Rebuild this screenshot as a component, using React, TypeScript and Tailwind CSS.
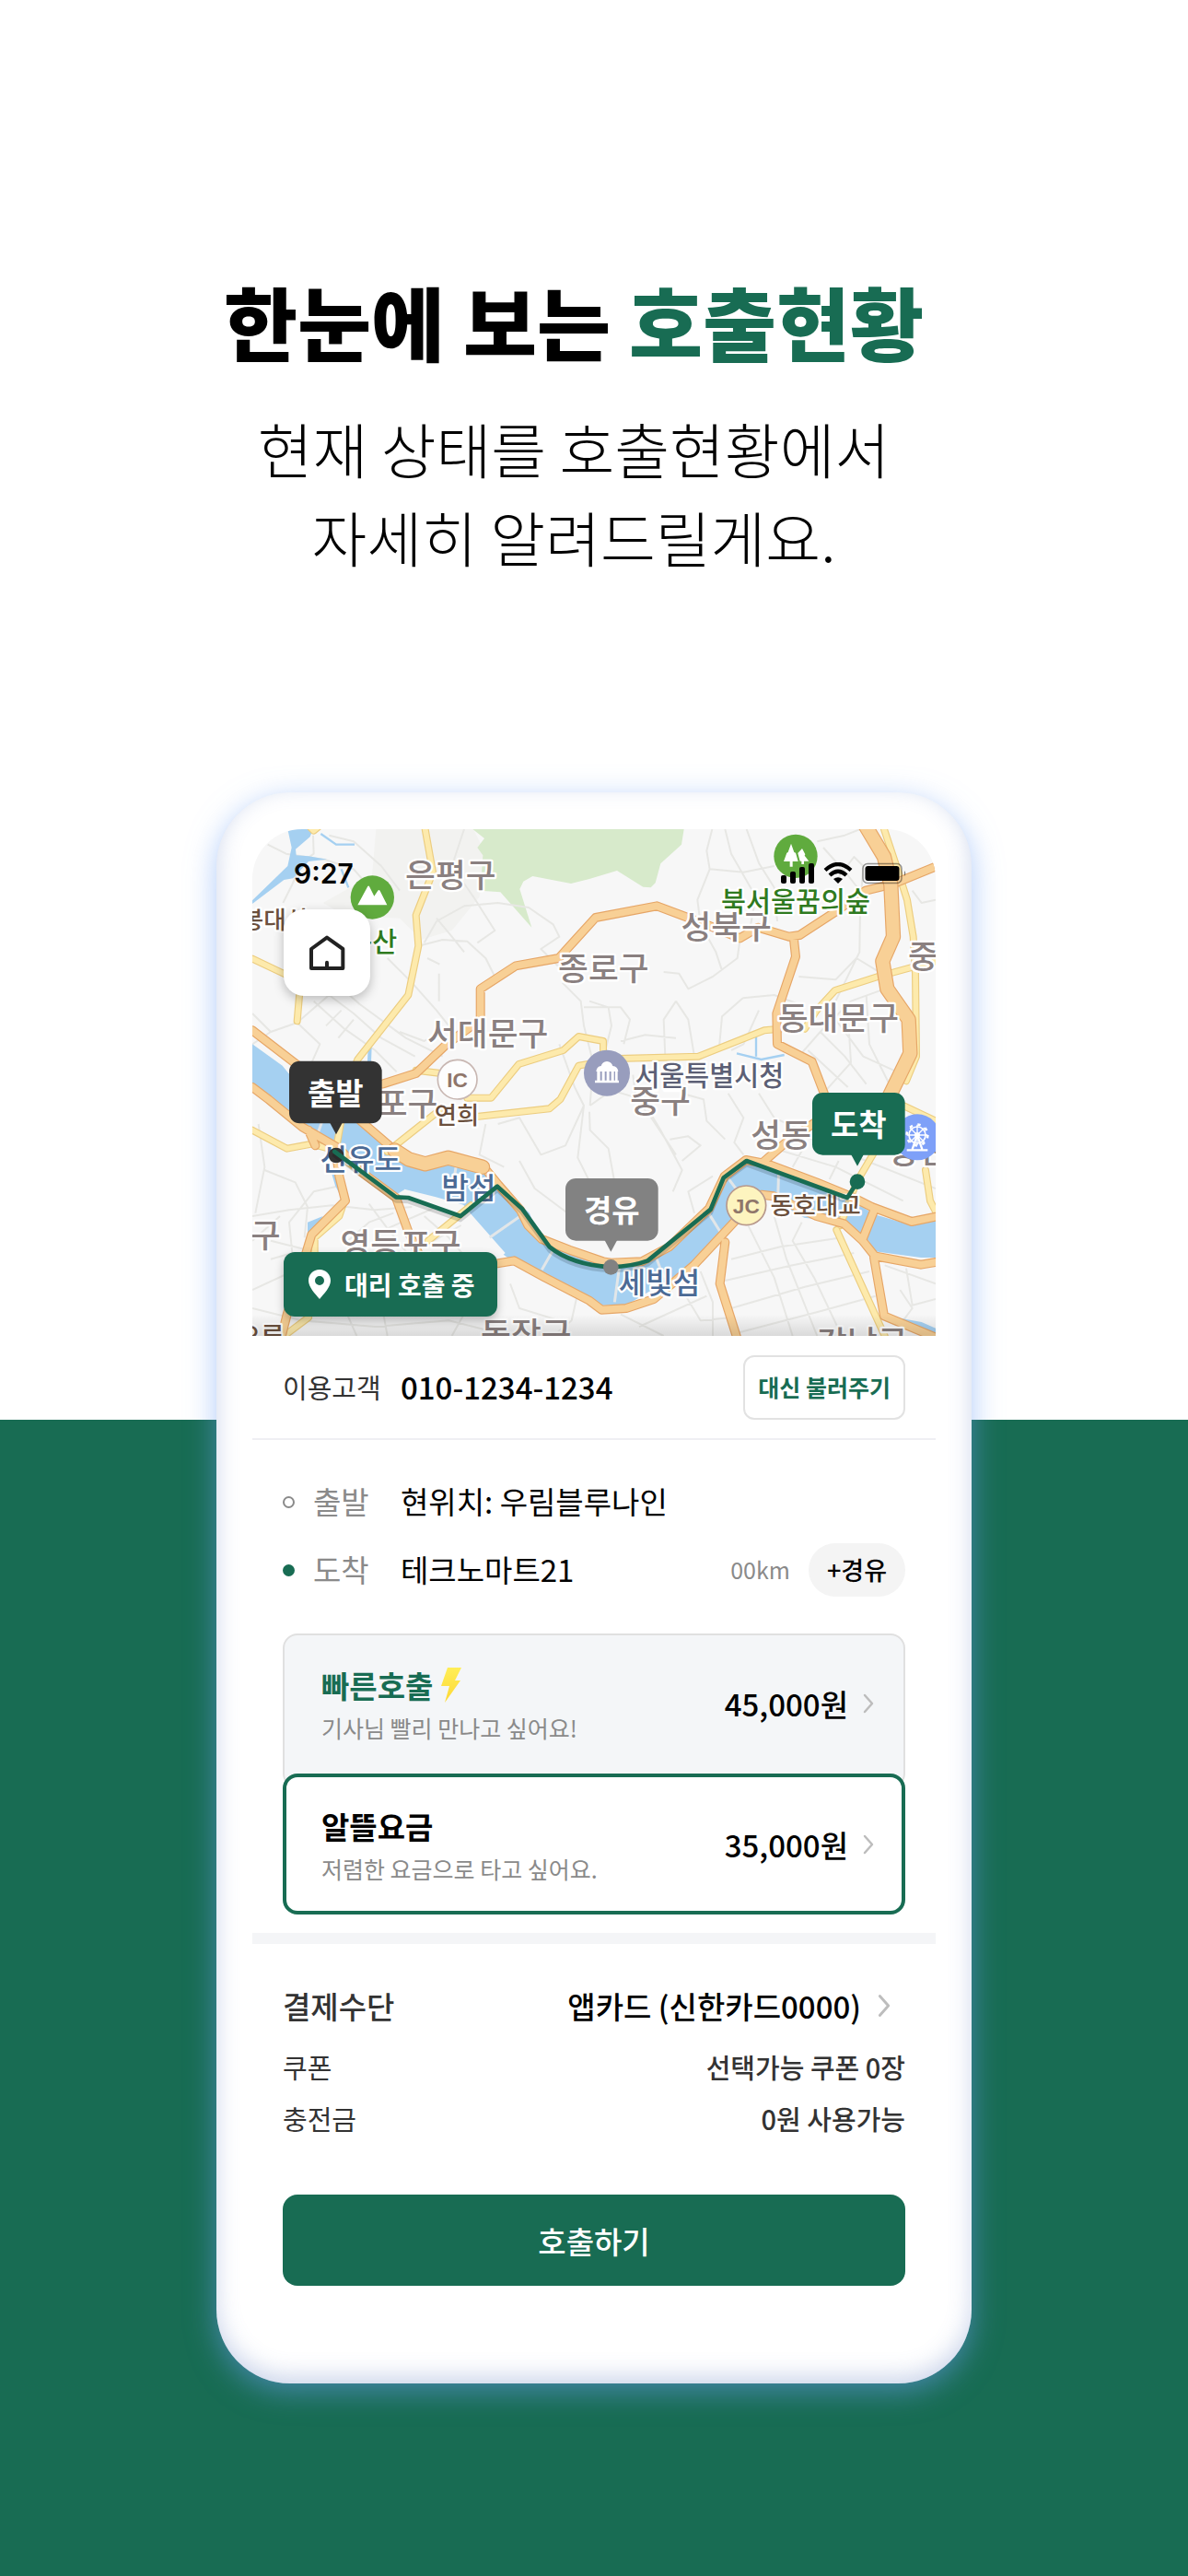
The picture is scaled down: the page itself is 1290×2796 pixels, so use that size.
import React from "react";

type Label = {
  text: string;
  x: number;
  y: number;
  size?: number;
  anchor?: "start" | "middle" | "end";
  fill?: string;
};

const GRAY = "#8a8080";
const BROWN = "#6b503d";
const GREEN = "#2f7a20";
const BLUE = "#4b6a95";

// map units are a third of a pixel at full width
const labels: Label[] = [
  { text: "은평구", x: 646, y: 190 },
  { text: "서대문구", x: 767, y: 705 },
  { text: "종로구", x: 1144, y: 492 },
  { text: "성북구", x: 1544, y: 357 },
  { text: "동대문구", x: 1909, y: 653 },
  { text: "중랑구", x: 2136, y: 453, anchor: "start" },
  { text: "중구", x: 1329, y: 924 },
  { text: "성동구", x: 1624, y: 1036, anchor: "start" },
  { text: "광진구", x: 2072, y: 1090, anchor: "start" },
  { text: "마포구", x: 604, y: 933, anchor: "end" },
  { text: "영등포구", x: 483, y: 1393 },
  { text: "강서구", x: 92, y: 1363, anchor: "end" },
  { text: "동작구", x: 892, y: 1683 },
  { text: "강남구", x: 1987, y: 1711 },
  { text: "오류", x: 104, y: 1684, size: 84, anchor: "end", fill: BROWN },
  { text: "연희", x: 666, y: 960, size: 79, fill: BROWN },
  { text: "봉대산", x: 184, y: 324, size: 80, anchor: "end", fill: BROWN },
  { text: "봉산", x: 391, y: 400, size: 88, fill: GREEN },
  { text: "북서울꿈의숲", x: 1770, y: 266, size: 88, fill: GREEN },
  { text: "서울특별시청", x: 1489, y: 833, size: 88, fill: "#5c5f75" },
  { text: "동호대교", x: 1835, y: 1255, size: 80, fill: BROWN },
  { text: "선유도", x: 353, y: 1110, size: 96, fill: BLUE },
  { text: "밤섬", x: 705, y: 1202, size: 96, fill: BLUE },
  { text: "세빛섬", x: 1326, y: 1513, size: 96, fill: BLUE },
];

const minorRoads = [
  "M50 50 L110 80 L240 100 L330 130 L400 210",
  "M198 20 L200 80 L160 110 L130 180 L100 240",
  "M250 20 L290 30 L330 40 L420 120 L480 200",
  "M690 0 L670 60 L650 120 L720 220 L790 330 L733 370",
  "M560 370 L600 300 L690 250 L800 240 L900 255 L980 310 L1000 350 L940 390 L1000 450",
  "M541 380 L620 360 L700 365 L760 420 L790 480",
  "M600 290 L650 350 L690 400",
  "M440 420 L520 500 L600 590 L640 640",
  "M608 470 L608 560",
  "M570 420 L610 440",
  "M1010 500 L1070 560 L1080 640 L1110 760 L1100 900",
  "M1080 580 L1200 580 L1230 620 L1210 700",
  "M0 700 L60 660 L146 630 L250 540 L330 600 L420 680 L530 740",
  "M146 630 L220 700 L180 790",
  "M200 560 L300 650 L400 720 L470 790",
  "M270 500 L350 570 L500 680 L620 740",
  "M240 640 L290 590 M280 680 L330 620",
  "M480 660 L560 690 L640 640",
  "M0 600 L60 660",
  "M2226 230 L2180 240 L2150 200",
  "M1498 0 L1480 70 L1490 130 L1450 230 L1460 310 L1510 400 L1530 460",
  "M1540 0 L1560 80 L1640 220 L1620 330",
  "M1610 0 L1650 110 L1700 190 L1710 300",
  "M1490 130 L1600 140 L1700 120",
  "M1840 40 L1930 20 L1980 0 M1860 60 L1940 150 L2010 240",
  "M1900 170 L1960 90 L1990 120 L1980 260 L1978 400 L1900 560",
  "M1780 480 L1900 490 L1968 420 L2050 470",
  "M1340 465 L1390 470 L1420 520 L1500 480 L1580 420 L1590 350",
  "M1380 560 L1420 620 L1440 740",
  "M1098 560 L1160 580 L1170 640 L1150 720",
  "M1380 560 L1340 620 L1345 740",
  "M1200 690 L1280 670 L1380 680",
  "M1598 550 L1700 540 L1780 570",
  "M1520 720 L1530 610 L1598 550",
  "M1650 590 L1600 700 L1560 720",
  "M1780 740 L1850 660 L1950 560 L2060 520",
  "M1850 660 L1930 740 L2000 830 M1810 720 L1940 840",
  "M1900 620 L1990 740 L2100 790",
  "M1940 600 L1950 760 L1860 860",
  "M2000 540 L2010 700 L2080 840",
  "M0 1260 L120 1240 L260 1225 L400 1240 L520 1230",
  "M20 960 L40 1100 L10 1250",
  "M40 1110 L140 1150 L180 1230 L170 1330",
  "M60 1400 L130 1380 L120 1280 L200 1180 L290 1160",
  "M0 1340 L90 1260 M0 1500 L130 1440",
  "M60 1340 L180 1370 L260 1390",
  "M380 1220 L440 1300 L520 1400 L640 1430",
  "M560 1260 L640 1330 L700 1400",
  "M440 1300 L600 1230 M520 1380 L680 1290",
  "M300 1350 L380 1280 L460 1250",
  "M0 1560 L160 1600 L400 1620 L640 1600 L800 1640",
  "M300 1560 L340 1650 M420 1540 L440 1650 M700 1560 L650 1650",
  "M840 1480 L870 1560 L1000 1600",
  "M1060 1510 L1040 1600 L980 1650",
  "M800 960 L870 940 L940 1060 L1020 1030 L1080 900",
  "M760 960 L740 1060 L820 1100",
  "M870 1080 L920 1170 L1040 1260",
  "M1000 700 L1050 840 L1080 900 L1060 1070 L1100 1150",
  "M1100 900 L1170 850 L1270 880 L1330 980 L1400 1110 L1370 1180",
  "M1098 920 L1100 980 L1160 1040 L1180 1150 L1240 1240",
  "M1240 800 L1250 880 L1300 940 L1380 1060",
  "M1400 860 L1470 880 L1480 950 L1540 1010",
  "M1360 1010 L1420 1000 L1460 1030 L1400 1080",
  "M1550 860 L1600 940 L1570 1020 L1600 1060",
  "M1650 860 L1700 940 L1790 980",
  "M1440 1250 L1420 1180 L1500 1130",
  "M1700 1040 L1900 1100 L2120 1210",
  "M1800 1000 L2000 1080 L2226 1170",
  "M1760 1100 L1800 1030 M1880 1140 L1910 1080",
  "M1560 1400 L1720 1360 L1920 1330",
  "M1540 1470 L1760 1420 L1960 1380",
  "M1560 1560 L1800 1490 L2010 1440",
  "M1580 1640 L1850 1570 L2030 1520",
  "M1610 1280 L1700 1460 L1760 1650",
  "M1700 1260 L1740 1400 L1840 1650",
  "M1790 1280 L1760 1340 L1830 1460 L1920 1650",
  "M1460 1440 L1500 1540 L1500 1650",
  "M1200 1580 L1340 1650 M1260 1620 L1480 1520",
  "M1400 1500 L1460 1600 L1560 1590",
  "M2060 1420 L2226 1480 M2130 1430 L2150 1550 L2226 1530",
  "M2110 1500 L2150 1560 L2120 1600",
];

const yellowRoads = [
  "M563 0 L588 140 L533 280 L541 380 L508 540 L343 750 L310 830 L275 1030",
  "M0 422 L110 474",
  "M155 520 L146 625",
  "M0 980 L113 1040 L193 1025 L250 1040 L353 1115",
  "M440 1050 L610 915",
  "M533 785 L613 795",
  "M700 875 L778 875 L868 765 L1013 720 L1063 675 L1143 690 L1143 760",
  "M723 937 L968 910 L1003 880 L1063 770 L1120 760",
  "M1190 747 L1453 740 L1668 655 L1720 650",
  "M1800 650 L1838 590 L1898 525 L2038 480 L2148 450 L2226 430",
  "M2058 0 L2098 120 L2133 230 L2153 350 L2160 470 L2163 740 L2130 820",
  "M2030 1045 L1968 1150 L1915 1290",
  "M1903 1305 L2060 1650",
  "M2110 895 L2226 950",
  "M2193 1110 L2208 1210 L2226 1245",
  "M713 1225 L573 1340",
  "M110 1645 L183 1590",
  "M203 1400 L203 1330 L283 1260 L300 1210",
  "M175 -20 L200 5 L230 -20",
];

const orangeRoads = [
  "M0 655 L143 765 L200 810 L353 950 L463 1045 L503 1070 L563 1090 L638 1070 L758 1105 L803 1160 L873 1240 L898 1290 L943 1335 L1033 1370 L1143 1408 L1168 1412 L1268 1408 L1358 1360 L1488 1235 L1538 1130 L1608 1077 L1678 1090 L1838 1150 L1948 1195 L2018 1230 L2148 1278 L2226 1262",
  "M0 840 L53 880 L163 970 L283 1040 L353 1115 L468 1200 L508 1310 L550 1400",
  "M273 1050 L283 1130 L303 1210 L193 1320 L163 1420 L113 1580 L93 1660",
  "M183 980 L205 1030",
  "M700 1430 L793 1415 L853 1405 L953 1460 L1098 1535 L1138 1565 L1218 1560 L1308 1530 L1438 1420 L1578 1270 L1658 1190 L1698 1195 L1838 1260 L1928 1285 L1988 1340 L2028 1390 L2178 1418 L2226 1410",
  "M2028 1235 L1990 1330",
  "M2025 1395 L2058 1585 L2226 1655",
  "M1540 1345 L1523 1480 L1580 1660",
  "M2226 122 L2088 178 L1998 200 L1898 270 L1783 345 L1748 350 L1648 320 L1588 355 L1478 310 L1318 250 L1118 288 L998 420 L858 445 L743 520 L743 620 L633 700 L533 795 L423 830",
  "M1763 350 L1770 415 L1708 600 L1710 700 L1823 757 L1870 880",
  "M1663 1085 L1738 1020 L1840 950",
];

const highways = [
  "M1998 -10 L2058 90 L2080 180 L2088 350 L2053 430 L2068 520 L2138 620 L2143 730 L2070 880",
  "M463 1045 L510 1075 L563 1090 L638 1070 L750 1100",
];

const bridges = [
  "M773 1330 L873 1260",
  "M943 1435 L980 1370",
  "M1180 1540 L1195 1430",
  "M1310 1380 L1340 1460",
  "M1480 1240 L1530 1320",
  "M1545 1130 L1590 1190",
  "M1715 1110 L1712 1200",
  "M210 1000 L235 930",
  "M650 1180 L665 1090",
];

type RoadsProps = {
  paths: string[];
  color: string;
  casing: string;
  width: number;
};

const Roads: React.FC<RoadsProps> = ({ paths, color, casing, width }) => (
  <g fill="none" strokeLinejoin="round" strokeLinecap="round">
    <path d={paths.join(" ")} stroke={casing} strokeWidth={width + 7} />
    <path d={paths.join(" ")} stroke={color} strokeWidth={width} />
  </g>
);

type MarkerProps = {
  label: string;
  x: number;
  y: number;
  tip: number;
  color: string;
};

const Marker: React.FC<MarkerProps> = ({ label, x, y, tip, color }) => (
  <g>
    <rect x={x} y={y} width="302" height="203" rx="34" fill={color} />
    <path d={`M${tip - 21} ${y + 200} h42 l-21 39 z`} fill={color} />
    <text
      x={x + 151}
      y={y + 141}
      fontSize="99"
      fontWeight="700"
      fill="#fff"
      textAnchor="middle"
    >
      {label}
    </text>
  </g>
);

const CityMap = () => (
  <svg
    viewBox="0 0 2226 1650"
    preserveAspectRatio="xMidYMid slice"
    className="block h-full w-full font-['Noto_Sans_CJK_KR',sans-serif]"
    role="img"
    aria-label="지도"
  >
    <defs>
      <linearGradient id="fade" x1="0" y1="0" x2="0" y2="1">
        <stop offset="0" stopColor="#000" stopOpacity="0" />
        <stop offset="1" stopColor="#000" stopOpacity="0.12" />
      </linearGradient>
    </defs>
    <rect width="2226" height="1650" fill="#f7f7f7" />
    <path
      d="M403 0 L720 0 L760 80 L740 220 L650 330 L550 360 L480 290 L300 280 L230 240 L390 150 Z"
      fill="#f2f2f0"
    />
    <path
      d="M718 0 L756 30 L733 60 L751 85 L743 200 L808 205 L910 320 L871 195 L883 170 L913 153 L1038 177 L1098 162 L1188 135 L1273 188 L1298 190 L1313 175 L1330 112 L1398 50 L1406 0 Z"
      fill="#d7eacb"
    />
    <path
      d={minorRoads.join(" ")}
      fill="none"
      stroke="#e7e7e4"
      strokeWidth="6"
      strokeLinejoin="round"
    />

    {/* water */}
    <g fill="#a5d0f1">
      <path d="M115 0 L198 0 L188 25 L141 65 L143 85 L183 88 L243 98 L183 105 L133 160 L103 165 L0 243 L0 232 L115 120 L128 60 Z" />
      <path d="M0 700 L98 770 L118 795 L353 960 L413 1010 L503 1060 L563 1100 L643 1070 L753 1100 L803 1160 L903 1250 L933 1330 L1033 1370 L1143 1410 L1168 1420 L1268 1405 L1358 1360 L1488 1240 L1538 1130 L1608 1080 L1698 1100 L1838 1160 L1938 1200 L2028 1255 L2148 1290 L2226 1265 L2226 1395 L2178 1395 L2028 1375 L2008 1340 L1988 1330 L1928 1280 L1798 1265 L1698 1210 L1638 1190 L1558 1280 L1448 1410 L1368 1460 L1218 1550 L1138 1550 L1098 1530 L1033 1500 L853 1410 L818 1385 L703 1250 L683 1225 L593 1200 L493 1175 L468 1190 L353 1130 L293 1080 L233 1010 L143 960 L0 850 Z" />
      <path d="M2098 1590 L2180 1605 L2226 1625 L2226 1645 L2110 1605 Z" />
      <path d="M180 1280 L230 1260 L200 1310 L180 1330 Z" />
      <path d="M255 1110 L275 1110 L290 1200 L270 1160 Z" />
    </g>
    <g fill="none" stroke="#a5d0f1" strokeWidth="7">
      <path d="M223 15 L273 50 L333 50" />
      <path d="M290 130 L313 190" />
      <path d="M383 710 L380 780" strokeWidth="12" />
      <path d="M1641 670 V740 M1578 730 L1658 750 L1733 735" />
    </g>
    <path
      d="M493 1180 L593 1205 L683 1230 L703 1255 L818 1385"
      fill="none"
      stroke="#f7f7f7"
      strokeWidth="16"
      strokeLinejoin="round"
    />
    <path d={bridges.join(" ")} fill="none" stroke="#e2e6e8" strokeWidth="9" />

    <Roads paths={yellowRoads} color="#fdeaac" casing="#eccd80" width={17} />
    <Roads paths={orangeRoads} color="#f8d096" casing="#e6a667" width={23} />
    <Roads paths={highways} color="#f8d096" casing="#e6a667" width={42} />

    {/* places */}
    <circle cx="391" cy="222" r="71" fill="#60ab3e" />
    <path
      d="M343 247 L376 186 Q379 182 382 188 L397 218 L409 200 Q413 196 416 201 L439 247 Z"
      fill="#fff"
    />
    <circle cx="1770" cy="88" r="71" fill="#60ab3e" />
    <path
      d="M1755 47 L1765 75 L1770 77 L1778 105 H1760 V122 H1751 V105 H1731 L1741 77 L1745 75 Z M1791 63 L1801 82 L1799 86 L1813 104 H1797 V114 H1789 V104 H1784 L1777 78 Z"
      fill="#fff"
    />
    <circle
      cx="668"
      cy="815"
      r="64"
      fill="#fdfdfd"
      stroke="#c8b7b2"
      strokeWidth="5"
    />
    <circle cx="1155" cy="794" r="75" fill="#989dbd" />
    <g fill="#fff">
      <path d="M1120 789 Q1122 772 1136 771 Q1140 757 1155 756 Q1170 757 1174 771 Q1190 772 1192 789 Z" />
      <path d="M1123 787 h10 v34 h-10 z M1139 787 h9 v34 h-9 z M1154 787 h9 v34 h-9 z M1169 787 h9 v34 h-9 z M1182 787 h8 v34 h-8 z M1116 818 h78 v8 h-78 z" />
    </g>

    <g stroke="#fff" strokeWidth="14" strokeLinejoin="round">
      {labels.map((label) => (
        <text
          key={label.text}
          x={label.x}
          y={label.y}
          fontSize={label.size ?? 107}
          fontWeight="500"
          textAnchor={label.anchor ?? "middle"}
          fill={label.fill ?? GRAY}
          paintOrder="stroke"
        >
          {label.text}
        </text>
      ))}
    </g>
    <circle cx="2166" cy="1003" r="75" fill="#7ea0f8" />
    <g stroke="#fff" fill="none">
      <circle cx="2166" cy="996" r="27" strokeWidth="5" />
      <circle
        cx="2166"
        cy="996"
        r="34"
        strokeWidth="8"
        strokeDasharray="10 16.7"
      />
      <path
        d="M2166 962 V1030 M2132 996 H2200 M2142 972 L2190 1020 M2190 972 L2142 1020"
        strokeWidth="4"
      />
      <path
        d="M2166 996 L2150 1042 M2166 996 L2182 1042 M2132 1045 H2200"
        strokeWidth="7"
      />
    </g>
    <circle cx="2166" cy="996" r="9" fill="#fff" />
    <circle
      cx="1609"
      cy="1225"
      r="64"
      fill="#fdf4bf"
      stroke="#b8998c"
      strokeWidth="5"
    />
    <g
      fontFamily="Liberation Sans, sans-serif"
      fontSize="68"
      fontWeight="700"
      textAnchor="middle"
      fill="#8f766a"
    >
      <text x="668" y="839">
        IC
      </text>
      <text x="1609" y="1250">
        JC
      </text>
    </g>

    {/* route */}
    <circle cx="273" cy="1062" r="25" fill="#333" />
    <circle cx="1971" cy="1148" r="25" fill="#186c53" />
    <g fill="none" strokeLinejoin="round" strokeLinecap="round">
      <path
        d="M268 1062 L468 1210 L508 1212 L678 1272 L798 1175 L878 1247 L968 1372 Q1040 1430 1168 1437 Q1240 1435 1288 1417 L1493 1250 L1535 1147 L1610 1092 L1938 1212"
        stroke="#000"
        strokeOpacity="0.15"
        strokeWidth="14"
      />
      <path
        d="M268 1050 L468 1198 L508 1200 L678 1260 L798 1163 L878 1235 L968 1360 Q1040 1418 1168 1426 Q1240 1423 1288 1405 L1493 1238 L1535 1135 L1610 1080 L1938 1200 L1971 1148"
        stroke="#186c53"
        strokeWidth="14"
      />
    </g>
    <circle cx="1168" cy="1426" r="25" fill="#828282" />
    <Marker label="출발" x={120} y={755} tip={273} color="#333333" />
    <Marker label="경유" x={1020} y={1137} tip={1168} color="#828282" />
    <Marker label="도착" x={1824} y={858} tip={1971} color="#186c53" />
    <rect y="1580" width="2226" height="70" fill="url(#fade)" />
  </svg>
);

const StatusBar = () => (
  <div className="flex h-8 items-center justify-between">
    <span className="font-['Inter',sans-serif] text-[30px] leading-8 font-semibold">
      9:27
    </span>
    <div className="flex items-center gap-[10px]">
      <svg width="36" height="24" viewBox="0 0 36 24">
        <rect x="0" y="14" width="6" height="9" rx="2" />
        <rect x="10" y="10" width="6" height="13" rx="2" />
        <rect x="20" y="5" width="6" height="18" rx="2" />
        <rect x="30" y="1" width="6" height="22" rx="2" />
      </svg>
      <svg width="32" height="24" viewBox="0 0 32 24" fill="none" stroke="#000">
        <path d="M2 8.500 Q16 -4.500 30 8.500" strokeWidth="4.200" />
        <path d="M7 14 Q16 5.500 25 14" strokeWidth="4.200" />
        <path d="M16 23 L11 18 Q16 14.500 21 18 Z" fill="#000" stroke="none" />
      </svg>
      <svg width="50" height="24" viewBox="0 0 50 24">
        <rect
          x="1"
          y="1.500"
          width="42"
          height="21"
          rx="5"
          fill="none"
          stroke="#000"
          strokeOpacity="0.4"
          strokeWidth="1.500"
        />
        <rect x="3.500" y="4" width="37" height="16" rx="3" />
        <path d="M46 9 q2.500 3 0 6 z" fillOpacity="0.5" />
      </svg>
    </div>
  </div>
);

const HomeIcon = () => (
  <svg
    className="size-10"
    viewBox="0 0 120 120"
    fill="none"
    stroke="#222"
    strokeWidth="12"
    strokeLinejoin="round"
    strokeLinecap="round"
  >
    <path d="M9 48 L60 11 L112 48 V111 H9 Z" />
    <path d="M60 111 V92" />
  </svg>
);

const PinIcon = () => (
  <svg width="26" height="34" viewBox="0 0 26 34" fill="#fff">
    <path
      fillRule="evenodd"
      d="M13 1 C6 1 1 6 1 13 C1 20 8 27 13 33 C18 27 25 20 25 13 C25 6 20 1 13 1 Z M13 8 A5 5 0 1 1 13 18 A5 5 0 1 1 13 8 Z"
    />
  </svg>
);

const BoltIcon = () => (
  <svg width="24" height="38" viewBox="0 0 24 38">
    <defs>
      <linearGradient id="bolt" x1="0" y1="0" x2="0" y2="1">
        <stop offset="0" stopColor="#ffee58" />
        <stop offset="1" stopColor="#fdd835" />
      </linearGradient>
    </defs>
    <path d="M8 0 H23 L16 14 H22 L5 38 L10 20 H1 Z" fill="url(#bolt)" />
  </svg>
);

const Chevron: React.FC<{ className: string }> = ({ className }) => (
  <svg
    className={className}
    viewBox="0 0 12 22"
    fill="none"
    stroke="#bdbdbd"
    strokeWidth="2.500"
    strokeLinecap="round"
    strokeLinejoin="round"
  >
    <path d="M2 2 L10 11 L2 20" />
  </svg>
);

type FareProps = {
  title: string;
  description: string;
  price: string;
  selected?: boolean;
  icon?: React.ReactNode;
};

const FareOption: React.FC<FareProps> = ({
  title,
  description,
  price,
  selected,
  icon,
}) => (
  <button
    type="button"
    aria-pressed={!!selected}
    className={
      selected
        ? "relative -mt-4 flex h-[153px] w-full items-center justify-between rounded-2xl border-4 border-[#186c53] bg-white pr-[30px] pl-[38px] text-left"
        : "flex h-[168px] w-full items-center justify-between rounded-2xl border-2 border-[#e0e0e0] bg-[#f4f6f8] pr-8 pb-4 pl-10 text-left"
    }
  >
    <span className="flex flex-col pt-1">
      <span
        className={
          selected
            ? "flex items-center gap-2 text-[33px] leading-12 font-bold"
            : "flex items-center gap-2 text-[33px] leading-12 font-bold text-[#186c53]"
        }
      >
        {title}
        {icon}
      </span>
      <span className="text-[25px] leading-11 text-[#8a8a8a]">
        {description}
      </span>
    </span>
    <span className="flex items-center gap-4 text-[33px] leading-12 font-medium">
      {price}
      <Chevron className="h-[22px] w-3" />
    </span>
  </button>
);

const App = () => {
  return (
    <main className="min-h-screen bg-[linear-gradient(to_bottom,#fff_55.1%,#186c53_55.1%)] pt-[298px] pb-[209px] font-['Noto_Sans_CJK_KR',sans-serif] text-black">
      <header className="pr-11 text-center">
        <h1 className="text-[87px] leading-[100px] font-black">
          한눈에 보는 <span className="text-[#186c53]">호출현황</span>
        </h1>
        <p className="mt-10 text-[65px] leading-24 font-light">
          현재 상태를 호출현황에서
          <br />
          자세히 알려드릴게요.
        </p>
      </header>

      <section className="mx-auto mt-[230px] w-full max-w-[820px] rounded-[80px] bg-white px-[39px] pt-10 pb-[106px] shadow-[0_8px_32px_rgba(110,160,245,0.55),inset_0_-8px_24px_rgba(90,120,190,0.3)]">
        <div className="relative h-[550px] overflow-hidden rounded-t-[54px]">
          <CityMap />
          <div className="absolute inset-0 flex flex-col items-start justify-between px-[34px] pt-8 pb-[21px]">
            <div className="w-full">
              <div className="-mr-1 pl-[11px]">
                <StatusBar />
              </div>
              <button
                type="button"
                aria-label="홈"
                className="mt-[23px] flex size-[94px] items-center justify-center rounded-[22px] bg-white shadow-[0_4px_12px_rgba(0,0,0,0.25)]"
              >
                <HomeIcon />
              </button>
            </div>
            <div className="flex h-[70px] items-center gap-[14px] rounded-xl bg-[#186c53] pr-6 pl-[26px] text-[28px] leading-10 font-bold text-white shadow-[0_4px_10px_rgba(0,0,0,0.25)]">
              <PinIcon />
              대리 호출 중
            </div>
          </div>
        </div>

        <div className="flex h-[113px] items-center border-b-2 border-[#efeff3] px-[33px]">
          <span className="w-32 text-[29px] text-[#333]">이용고객</span>
          <span className="flex-1 text-[33px] font-medium">010-1234-1234</span>
          <button
            type="button"
            className="h-[70px] rounded-xl border-2 border-[#e2e2e2] px-[14px] text-[25px] font-bold text-[#186c53]"
          >
            대신 불러주기
          </button>
        </div>

        <div className="px-[33px] pt-[38px]">
          <dl className="flex flex-col gap-4 text-[33px]">
            <div className="flex h-[58px] items-center">
              <dt className="flex w-32 items-center gap-5 text-[#8a8a8a]">
                <i className="size-[13px] rounded-full border-2 border-[#8a8a8a]" />
                출발
              </dt>
              <dd>현위치: 우림블루나인</dd>
            </div>
            <div className="flex h-[58px] items-center">
              <dt className="flex w-32 items-center gap-5 text-[#8a8a8a]">
                <i className="size-[13px] rounded-full bg-[#186c53]" />
                도착
              </dt>
              <dd className="flex-1">테크노마트21</dd>
              <dd className="flex items-center gap-5 text-[25px] text-[#8a8a8a]">
                00km
                <button
                  type="button"
                  className="h-[58px] rounded-full bg-[#f4f4f4] px-5 text-[27px] font-medium text-black"
                >
                  +경유
                </button>
              </dd>
            </div>
          </dl>

          <div className="mt-10">
            <FareOption
              title="빠른호출"
              description="기사님 빨리 만나고 싶어요!"
              price="45,000원"
              icon={<BoltIcon />}
            />
            <FareOption
              title="알뜰요금"
              description="저렴한 요금으로 타고 싶어요."
              price="35,000원"
              selected
            />
          </div>
        </div>

        <div className="mt-5 h-3 bg-[#f4f5f7]" />

        <div className="px-[33px] pt-[43px] text-[29px] leading-11 text-[#333]">
          <div className="flex items-center justify-between text-[33px] leading-12 font-medium">
            <span>결제수단</span>
            <button
              type="button"
              className="flex items-center gap-[18px] pr-4 text-black"
            >
              앱카드 (신한카드0000)
              <Chevron className="h-[26px] w-[14px]" />
            </button>
          </div>
          <div className="mt-5 flex justify-between">
            <span>쿠폰</span>
            <span className="font-medium">선택가능 쿠폰 0장</span>
          </div>
          <div className="mt-3 flex justify-between">
            <span>충전금</span>
            <span className="font-medium">0원 사용가능</span>
          </div>
          <button
            type="button"
            className="mt-[61px] h-[99px] w-full rounded-2xl bg-[#186c53] text-[33px] font-medium text-white"
          >
            호출하기
          </button>
        </div>
      </section>
    </main>
  );
};

export default App;
